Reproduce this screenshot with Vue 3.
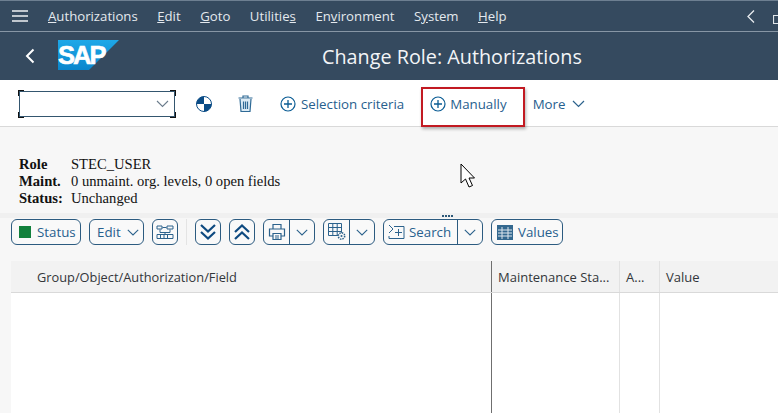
<script setup>
const menus = [
  { pre: '', u: 'A', post: 'uthorizations' },
  { pre: '', u: 'E', post: 'dit' },
  { pre: '', u: 'G', post: 'oto' },
  { pre: 'Utilitie', u: 's', post: '' },
  { pre: 'En', u: 'v', post: 'ironment' },
  { pre: 'S', u: 'y', post: 'stem' },
  { pre: '', u: 'H', post: 'elp' },
]
</script>

<template>
  <div class="page">
    <header class="shell">
      <div class="menubar">
        <svg class="burger" width="16" height="12" viewBox="0 0 16 12"><path d="M0 1h16M0 6h16M0 11h16" stroke="#eef1f4" stroke-width="1.6"/></svg>
        <nav class="menus">
          <span v-for="m in menus" :key="m.pre + m.u" class="menu">{{ m.pre }}<u>{{ m.u }}</u>{{ m.post }}</span>
        </nav>
        <svg class="prev" width="8" height="13" viewBox="0 0 8 13"><path d="M7 .5L1 6.500l6 6" fill="none" stroke="#e8ecf0" stroke-width="1.300"/></svg>
        <svg class="next" width="12" height="9" viewBox="0 0 12 9"><path d="M.5.5h11v8H.5z" fill="none" stroke="#dfe5ea" stroke-width="1.200"/></svg>
      </div>
      <div class="titlebar">
        <svg class="back" width="10" height="16" viewBox="0 0 10 16"><path d="M8.500 1.500L2 8l6.500 6.500" fill="none" stroke="#fff" stroke-width="2"/></svg>
        <svg class="logo" width="61" height="30" viewBox="0 0 61 30">
          <defs><linearGradient id="sapg" x1="0" y1="0" x2="0" y2="1"><stop offset="0" stop-color="#1ea8e8"/><stop offset="1" stop-color="#0a86cc"/></linearGradient></defs>
          <path d="M0 0h61L31 30H0z" fill="url(#sapg)"/>
          <text x="0" y="24" class="logotext">SAP</text>
        </svg>
        <h1 class="title">Change Role: Authorizations</h1>
      </div>
    </header>

    <div class="toolbar">
      <div class="combo">
        <i class="corner tl"></i><i class="corner tr"></i><i class="corner bl"></i><i class="corner br"></i>
        <svg class="comboarrow" width="13" height="8" viewBox="0 0 13 8"><path d="M1 1l5.500 5.500L12 1" fill="none" stroke="#6b7c8c" stroke-width="1.100"/></svg>
      </div>
      <svg class="ticon pie" width="16" height="16" viewBox="0 0 16 16">
        <circle cx="8" cy="8" r="7.500" fill="#fff" stroke="#0a4c86" stroke-width="1"/>
        <path d="M8 8V.5A7.500 7.500 0 0 0 .5 8zM8 8h7.500A7.500 7.500 0 0 1 8 15.500z" fill="#0a4c86"/>
      </svg>
      <svg class="ticon trash" width="15" height="17" viewBox="0 0 15 17">
        <path d="M2 4l1 12.500h9L13 4z" fill="#dcebf5"/>
        <path d="M5 2.500V1h5v1.500M.5 3h14M2 4l1 12.500h9L13 4M5.500 6.500v7.500M7.500 6.500v7.500M9.500 6.500v7.500" fill="none" stroke="#2f6a96" stroke-width="1.200"/>
      </svg>
      <span class="tbtn sel"><svg width="16" height="16" viewBox="0 0 16 16"><circle cx="8" cy="8" r="7" fill="none" stroke="#0a5c94" stroke-width="1.200"/><path d="M8 4v8M4 8h8" stroke="#0a5c94" stroke-width="1.300"/></svg>Selection criteria</span>
      <span class="tbtn man">
        <svg width="16" height="16" viewBox="0 0 16 16"><circle cx="8" cy="8" r="7" fill="none" stroke="#0a5c94" stroke-width="1.200"/><path d="M8 4v8M4 8h8" stroke="#0a5c94" stroke-width="1.300"/></svg>Manually
      </span>
      <span class="tbtn more">More<svg width="13" height="8" viewBox="0 0 13 8"><path d="M1 1l5.500 5.500L12 1" fill="none" stroke="#2c628c" stroke-width="1.200"/></svg></span>
    </div>

    <main class="content">
      <section class="info">
        <div class="line"><b>Role</b><span>STEC_USER</span></div>
        <div class="line"><b>Maint.</b><span>0 unmaint. org. levels, 0 open fields</span></div>
        <div class="line"><b>Status:</b><span>Unchanged</span></div>
        <svg class="cursor" width="16" height="26" viewBox="0 0 16 26"><path d="M1 1v19l4.500-4 3.500 8 3.500-1.500-3.500-7.500h5.500z" fill="#fff" stroke="#000" stroke-width="1"/></svg>
      </section>

      <div class="splitter"><i></i><i></i><i></i><i></i></div>

      <div class="alvbar">
        <span class="abtn status"><i class="green"></i>Status</span>
        <span class="abtn edit">Edit<svg width="12" height="7" viewBox="0 0 12 7"><path d="M.8.8L6 6 11.200.8" fill="none" stroke="#2c628c" stroke-width="1.100"/></svg></span>
        <span class="abtn icon">
          <svg width="18" height="15" viewBox="0 0 18 15"><path d="M1 1h5v3H1zM11 1h6v3h-6zM6.500 2.500h4M4 4.500v3M14 4.500v3M4 7.500h10M9 7.500v2M1 9.500h16v4H1zM4.500 9.500v4M8 9.500v4M11.500 9.500v4" fill="none" stroke="#2c628c" stroke-width="1"/></svg>
        </span>
        <i class="vsep"></i>
        <span class="abtn icon">
          <svg width="18" height="18" viewBox="0 0 18 18"><path d="M2 2l7 6.500L16 2M2 9l7 6.500L16 9" fill="none" stroke="#0e4a80" stroke-width="2.200"/></svg>
        </span>
        <span class="abtn icon">
          <svg width="18" height="18" viewBox="0 0 18 18"><path d="M2 9l7-6.500L16 9M2 16l7-6.500L16 16" fill="none" stroke="#0e4a80" stroke-width="2.200"/></svg>
        </span>
        <span class="abtn split w52">
          <span class="sicon"><svg width="18" height="18" viewBox="0 0 18 18"><path d="M5 6V1.500h8V6M5 13H1.500V6h15v7H13M5 10.500h8v6H5zM7 13h4M7 15h4" fill="none" stroke="#2c628c" stroke-width="1.200"/></svg></span>
          <span class="sarrow"><svg width="12" height="7" viewBox="0 0 12 7"><path d="M.8.8L6 6 11.200.8" fill="none" stroke="#2c628c" stroke-width="1.100"/></svg></span>
        </span>
        <span class="abtn split w52">
          <span class="sicon"><svg width="18" height="18" viewBox="0 0 18 18"><path d="M.5.5h13v12H.5zM.5 4.500h13M.5 8.500h13M4.800.5v12M9.200.5v12" fill="none" stroke="#2c628c" stroke-width="1"/><circle cx="13.500" cy="13" r="3.200" fill="#f7f7f7" stroke="#2c628c" stroke-width="1.500" stroke-dasharray="1.500 1"/><circle cx="13.500" cy="13" r="1" fill="#2c628c"/></svg></span>
          <span class="sarrow"><svg width="12" height="7" viewBox="0 0 12 7"><path d="M.8.8L6 6 11.200.8" fill="none" stroke="#2c628c" stroke-width="1.100"/></svg></span>
        </span>
        <span class="abtn split w100">
          <span class="sicon stext"><svg width="17" height="17" viewBox="0 0 17 17"><path d="M1 1l4 4-4 4M6 2.500h10v12H1V12M7 8.500h7M10.500 5v7" fill="none" stroke="#2c628c" stroke-width="1"/></svg>Search</span>
          <span class="sarrow"><svg width="12" height="7" viewBox="0 0 12 7"><path d="M.8.8L6 6 11.200.8" fill="none" stroke="#2c628c" stroke-width="1.100"/></svg></span>
        </span>
        <span class="abtn values">
          <svg width="16" height="15" viewBox="0 0 16 15"><path d="M0 0h16v15H0z" fill="#33688f"/><path d="M5 2v12M11 2v12M1 5h14M1 8h14M1 11h14" stroke="#dfe7ee" stroke-width="1"/></svg>Values
        </span>
      </div>

      <section class="grid">
        <div class="ghead">
          <div class="col c1">Group/Object/Authorization/Field</div>
          <div class="col c2">Maintenance Sta...</div>
          <div class="col c3">A...</div>
          <div class="col c4">Value</div>
        </div>
        <div class="gbody">
          <div class="cell c1"></div>
          <div class="cell c2"></div>
          <div class="cell c3"></div>
          <div class="cell c4"></div>
        </div>
      </section>
    </main>
  </div>
</template>

<style>
html, body { margin: 0; background: #f7f7f7; }
</style>

<style scoped>
.page {
  width: 778px;
  height: 413px;
  overflow: hidden;
  display: flex;
  flex-direction: column;
  font-family: "Open Sans", "Noto Sans", sans-serif;
  background: #f7f7f7;
}
.shell { background: #354a5f; color: #fff; border-top: 1px solid #6d7f91; flex: none; }
.menubar {
  height: 30px;
  display: flex;
  align-items: center;
  border-bottom: 1px solid #8796a5;
  padding-left: 12px;
  overflow: hidden;
}
.burger { flex: none; }
.menus { display: flex; gap: 19.500px; margin-left: 20px; width: 699px; flex: none; }
.menu { font-size: 13.200px; color: #e4e9ee; white-space: nowrap; }
.prev { flex: none; }
.next { flex: none; margin-left: 18px; margin-top: 7px; }
.titlebar {
  height: 48px;
  display: flex;
  align-items: center;
}
.back { margin-left: 25px; flex: none; }
.logo { margin-left: 23px; margin-top: -2px; flex: none; }
.logotext {
  font-family: "Liberation Sans", sans-serif;
  font-weight: 700;
  font-size: 25.500px;
  fill: #fff;
  letter-spacing: -2px;
  stroke: #fff;
  stroke-width: .6px;
}
.title {
  margin: 0 0 0 203px;
  font-size: 19.800px;
  font-weight: 400;
  color: #f3f5f7;
  white-space: nowrap;
}

.toolbar {
  height: 45px;
  padding-top: 1px;
  background: #fff;
  border-bottom: 1px solid #d9d9d9;
  display: flex;
  align-items: center;
  flex: none;
}
.combo {
  margin-left: 19px;
  width: 156px;
  height: 26px;
  border: 1px solid #34566f;
  box-sizing: border-box;
  position: relative;
  display: flex;
  align-items: center;
  justify-content: flex-end;
  padding-right: 5px;
  flex: none;
}
.corner { position: absolute; width: 5px; height: 5px; border: 0 solid #111; }
.tl { left: -2px; top: -2px; border-left-width: 1.500px; border-top-width: 1.500px; }
.tr { right: -2px; top: -2px; border-right-width: 1.500px; border-top-width: 1.500px; }
.bl { left: -2px; bottom: -2px; border-left-width: 1.500px; border-bottom-width: 1.500px; }
.br { right: -2px; bottom: -2px; border-right-width: 1.500px; border-bottom-width: 1.500px; }
.ticon { flex: none; }
.pie { margin-left: 21px; }
.trash { margin-left: 26px; }
.tbtn {
  display: inline-flex;
  align-items: center;
  font-size: 13.300px;
  color: #27608e;
  white-space: nowrap;
  flex: none;
}
.tbtn svg { flex: none; }
.sel { margin-left: 27px; gap: 5px; }
.man {
  margin-left: 26px;
  gap: 4px;
  position: relative;
}
.man::after {
  content: "";
  position: absolute;
  left: -9px;
  top: -8px;
  width: 104px;
  height: 40px;
  box-sizing: border-box;
  border: 2px solid #c21a22;
  box-shadow: 1px 2px 3px rgba(0,0,0,.3);
}
.more { margin-left: 26px; gap: 7px; }

.content { flex: 1; min-height: 0; display: flex; flex-direction: column; }
.info {
  position: relative;
  height: 86px;
  box-sizing: border-box;
  padding: 29px 0 0 19px;
  font-family: "Liberation Serif", serif;
  font-size: 14.600px;
  line-height: 17px;
  color: #111;
  flex: none;
}
.line { display: flex; }
.line b { width: 52px; flex: none; }
.cursor { position: absolute; left: 460px; top: 36px; }

.splitter {
  height: 5px;
  background: #f0f0f0;
  display: flex;
  justify-content: center;
  gap: 1px;
  align-items: center;
  flex: none;
  padding-left: 116px;
}
.splitter i { width: 2px; height: 2px; background: #2c5878; }

.alvbar {
  height: 32px;
  display: flex;
  align-items: center;
  padding-left: 11px;
  gap: 8px;
  flex: none;
  margin-top: -2px;
}
.abtn {
  height: 26px;
  box-sizing: border-box;
  border: 1px solid #2c5b80;
  border-radius: 6px;
  background: #f9f9f9;
  font-size: 13.300px;
  color: #27608e;
  display: inline-flex;
  align-items: center;
  white-space: nowrap;
  flex: none;
}
.green { width: 12px; height: 12px; background: #12803c; margin-right: 6px; display: block; }
.status { width: 70px; padding-left: 7px; box-sizing: border-box; }
.edit { width: 55px; padding-left: 7px; gap: 6px; }
.icon { width: 26px; justify-content: center; }
.vsep { width: 1px; height: 26px; background: #e4e4e4; flex: none; }
.split { padding: 0; }
.w52 { width: 52px; }
.w100 { width: 100px; }
.sicon { display: inline-flex; align-items: center; justify-content: center; height: 100%; width: 26px; border-right: 1px solid #2c5b80; box-sizing: border-box; flex: none; }
.stext { width: 74px; gap: 4px; justify-content: flex-start; padding-left: 4px; }
.sarrow { flex: 1; display: inline-flex; justify-content: center; align-items: center; }
.values { width: 72px; padding-left: 5px; gap: 5px; }

.grid { flex: 1; margin: 13px 0 0 11px; display: flex; flex-direction: column; min-height: 0; }
.ghead, .gbody { display: flex; }
.ghead { height: 32px; background: #f2f2f2; border-bottom: 1px solid #d9d9d9; flex: none; box-sizing: border-box; }
.gbody { flex: 1; background: #fff; }
.col { font-size: 13px; color: #32363a; display: flex; align-items: center; white-space: nowrap; box-sizing: border-box; padding-left: 6px; }
.c1 { width: 480px; padding-left: 26px; font-size: 12.800px; }
.c2 { width: 128px; border-left: 1px solid #6f6f6f; }
.c3 { width: 40px; border-left: 1px solid #e2e2e2; }
.c4 { flex: 1; border-left: 1px solid #e2e2e2; }
.cell { box-sizing: border-box; }
</style>
